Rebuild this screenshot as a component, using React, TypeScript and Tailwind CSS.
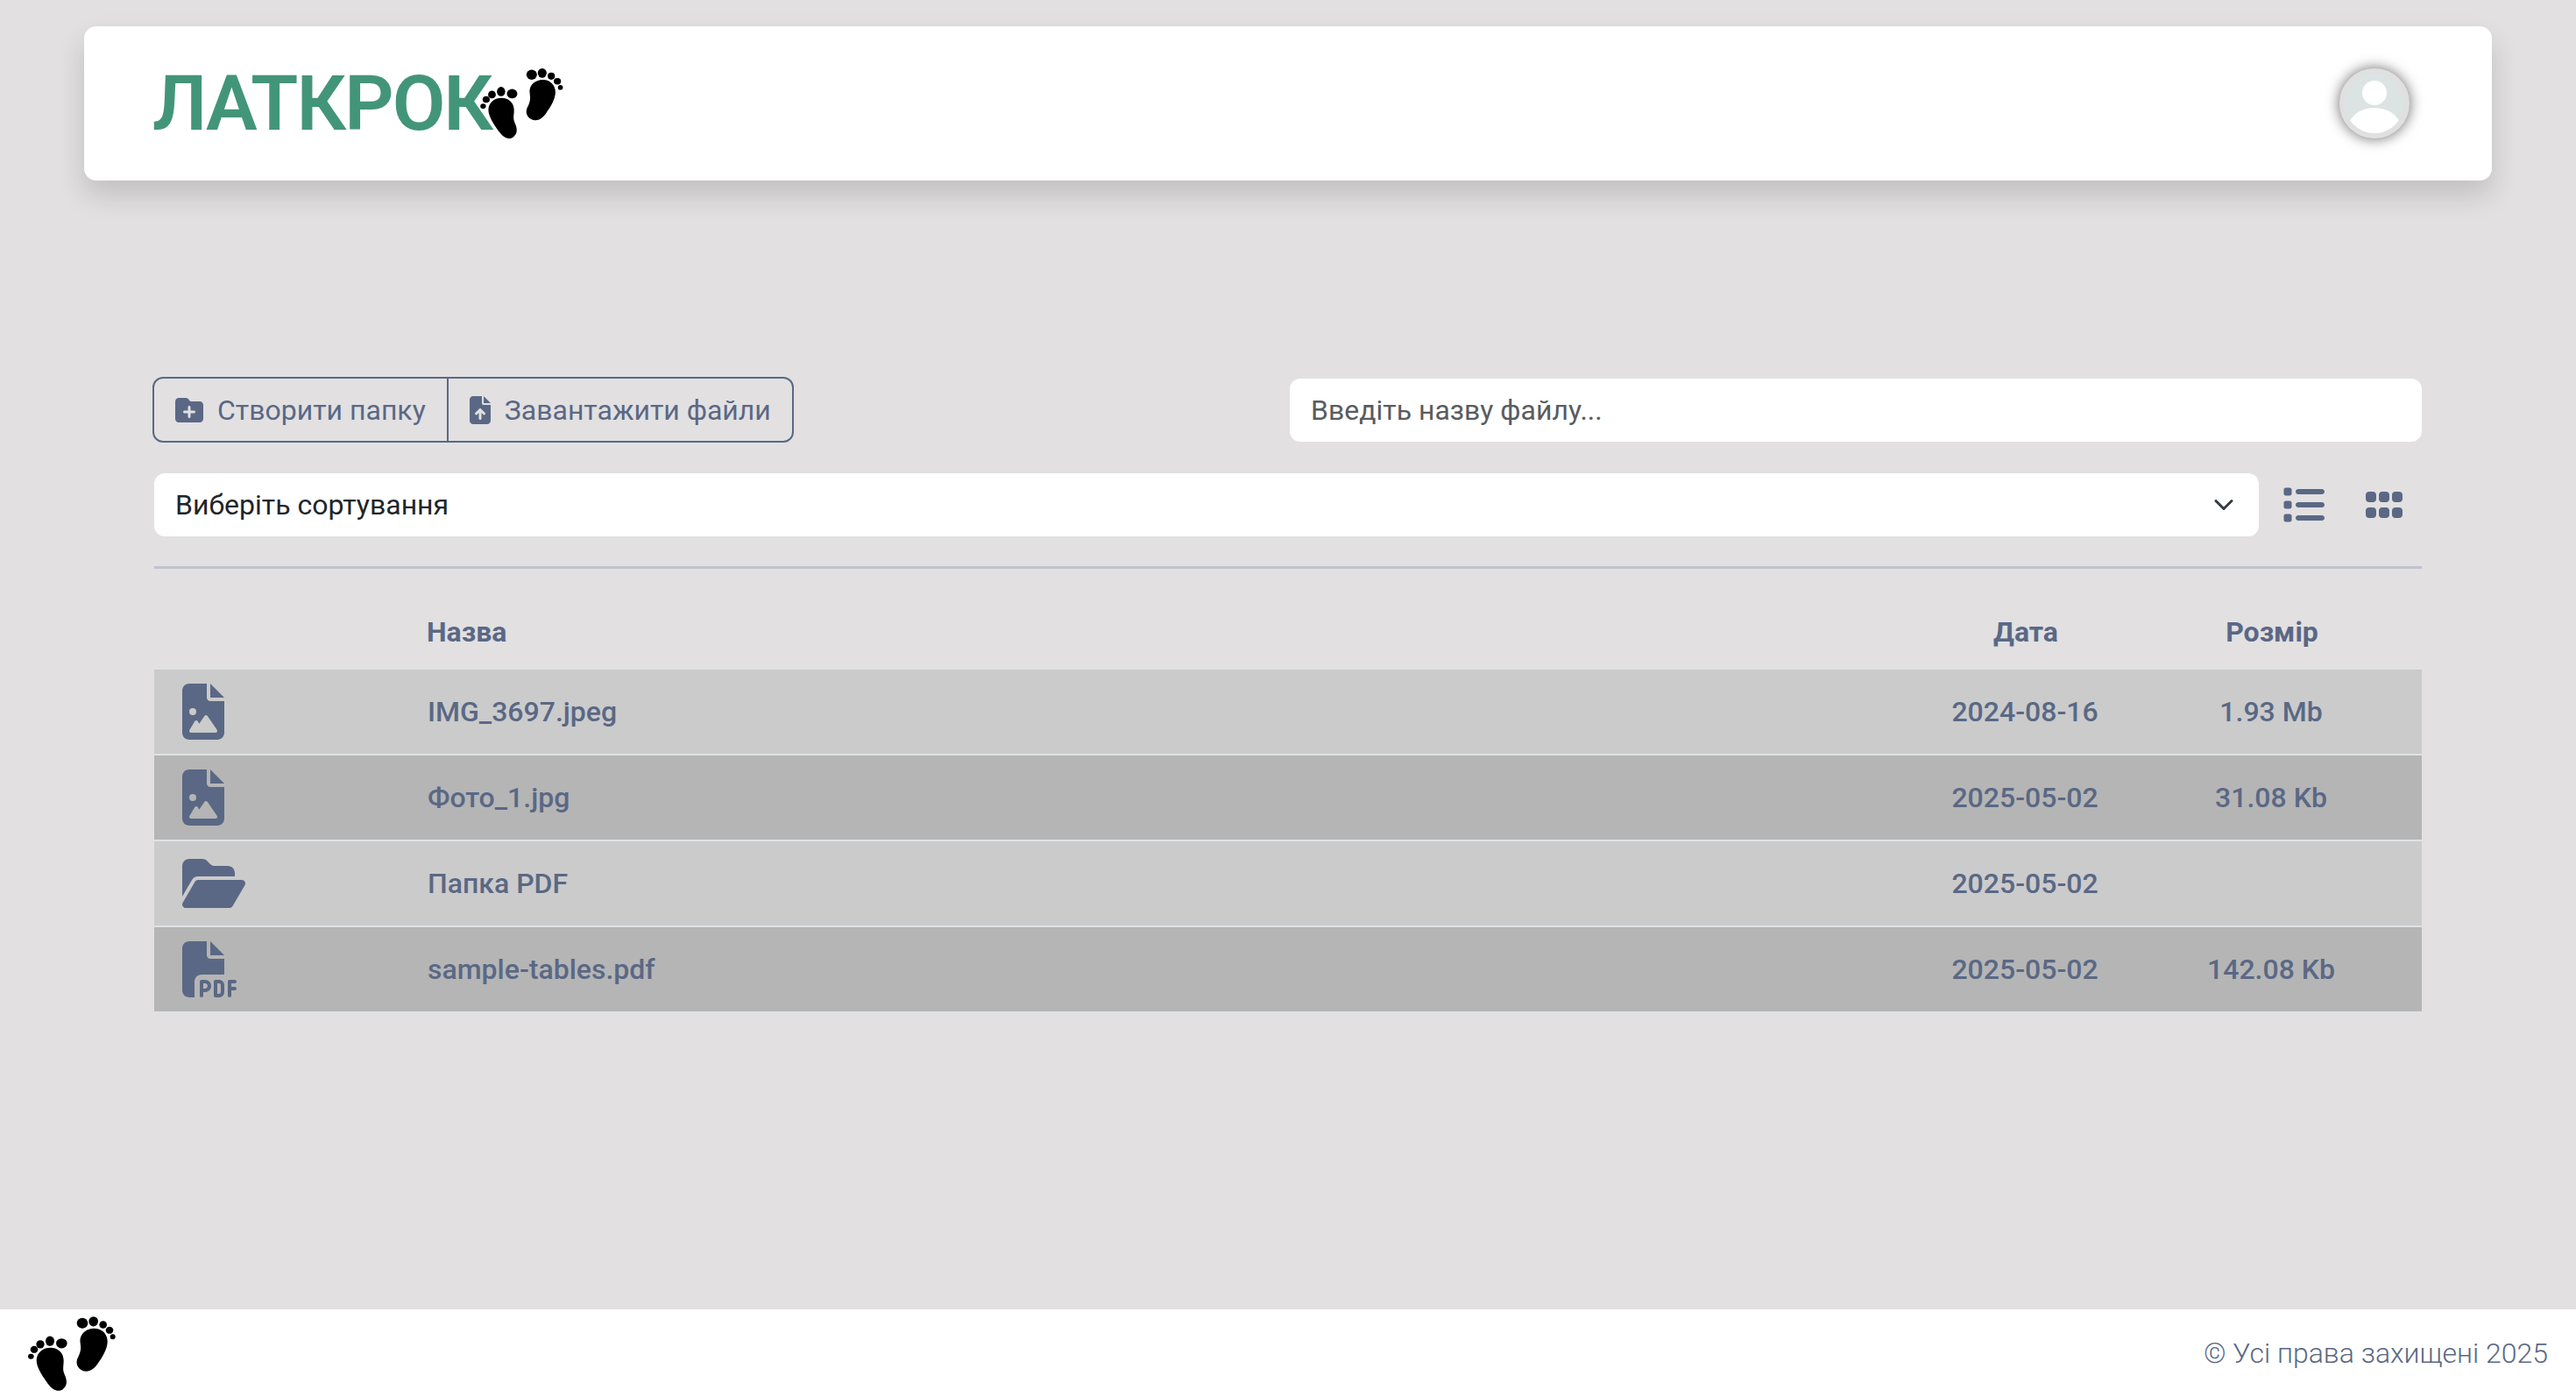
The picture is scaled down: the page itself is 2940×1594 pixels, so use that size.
import React from 'react';
import { FaFileArrowUp, FaFileImage, FaFilePdf, FaFolderOpen, FaFolderPlus, FaGrip, FaList } from 'react-icons/fa6';

const Feet = ({ className }: { className: string }) => (
  <svg viewBox="96 94 300 254" className={className} fill="#000">
    <path d="M172 201C200 201 218 220 218 245C218 265 213 275 221 292C230 312 232 330 215 343C198 354 180 345 165 325C150 305 125 270 125 245C125 220 145 201 172 201Z" />
    <ellipse cx="211" cy="186" rx="19" ry="17" />
    <ellipse cx="171" cy="178" rx="15" ry="17" />
    <ellipse cx="138" cy="189" rx="14" ry="14" />
    <ellipse cx="117" cy="207" rx="13" ry="12" />
    <ellipse cx="106" cy="231" rx="10" ry="9" />
    <path d="M322 135C350 135 368 155 368 180C368 205 350 235 335 255C320 278 300 288 280 278C262 268 258 250 268 232C276 215 278 205 275 185C270 155 295 135 322 135Z" />
    <ellipse cx="282" cy="117" rx="19" ry="18" />
    <ellipse cx="320" cy="111" rx="16" ry="17" />
    <ellipse cx="353" cy="122" rx="13" ry="13" />
    <ellipse cx="375" cy="141" rx="13" ry="12" />
    <ellipse cx="386" cy="163" rx="9" ry="9" />
  </svg>
);

const files = [
  { icon: 'image', name: 'IMG_3697.jpeg', date: '2024-08-16', size: '1.93 Mb' },
  { icon: 'image', name: 'Фото_1.jpg', date: '2025-05-02', size: '31.08 Kb' },
  { icon: 'folder', name: 'Папка PDF', date: '2025-05-02', size: '' },
  { icon: 'pdf', name: 'sample-tables.pdf', date: '2025-05-02', size: '142.08 Kb' },
];

const FileIcon = ({ type }: { type: string }) => {
  if (type === 'folder') return <FaFolderOpen className="h-[64px] w-[72px]" />;
  if (type === 'pdf') return <FaFilePdf className="h-[64px] w-[64px]" />;
  return <FaFileImage className="h-[64px] w-[48px]" />;
};

export default function App() {
  return (
    <div className="min-h-screen flex flex-col bg-[#e2e0e1] text-[#5a6885] font-['Roboto',sans-serif] text-[32px]">
      {/* Header */}
      <header className="ml-[96px] mr-[96px] mt-[30px] h-[176px] bg-white rounded-[14px] shadow-[0_16px_32px_rgba(0,0,0,0.15)] flex items-center justify-between pl-[78px] pr-[94px]">
        <div className="flex items-center">
          <span className="text-[88px] leading-none font-semibold text-[#43957a] tracking-[-2px]">ЛАТКРОК</span>
          <Feet className="w-[95px] h-[80px] -ml-[13px]" />
        </div>
        <div className="w-[80px] h-[80px] rounded-full border-[6px] border-[#e0e0e0] bg-[#dce3e3] shadow-[0_0_16px_rgba(0,0,0,0.6)] overflow-hidden">
          <svg viewBox="0 0 68 68" className="w-full h-full" fill="#fff">
            <circle cx="34" cy="22" r="14" />
            <ellipse cx="34" cy="62" rx="30" ry="23" />
          </svg>
        </div>
      </header>

      {/* Content */}
      <main className="mt-[224px] ml-[174px] mr-[176px]">
        <div className="flex items-center justify-between">
          <div className="flex h-[75px] border-2 border-[#5a6885] rounded-[12px]">
            <button className="flex items-center gap-[16px] pl-[24px] pr-[24px] text-[#5a6885]">
              <FaFolderPlus className="h-[32px] w-[32px]" />
              <span>Створити папку</span>
            </button>
            <button className="flex items-center gap-[16px] pl-[24px] pr-[24px] border-l-2 border-[#5a6885] text-[#5a6885]">
              <FaFileArrowUp className="h-[32px] w-[24px]" />
              <span>Завантажити файли</span>
            </button>
          </div>
          <div className="w-[1292px] h-[72px] bg-white rounded-[12px] flex items-center pl-[24px] text-[#595c5f]">
            Введіть назву файлу...
          </div>
        </div>

        <div className="flex items-center mt-[35px] ml-[2px]">
          <div className="w-[2402px] h-[72px] bg-white rounded-[12px] flex items-center justify-between pl-[24px] pr-[28px] text-[#212529]">
            <span>Виберіть сортування</span>
            <svg viewBox="0 0 16 16" className="w-[24px] h-[24px]" fill="none" stroke="#343a40" strokeWidth="2" strokeLinecap="round" strokeLinejoin="round">
              <path d="m2 5 6 6 6-6" />
            </svg>
          </div>
          <FaList className="h-[48px] w-[48px] ml-[27px]" />
          <FaGrip className="h-[48px] w-[42px] ml-[47px]" />
        </div>

        <div className="mt-[34px] ml-[2px] h-[3px] bg-[#c0c2cb]" />

        {/* File table */}
        <div className="ml-[2px]">
          <div className="grid grid-cols-[311px_1fr_220px_342px] items-center h-[115px] pt-[30px] font-bold border-b-2 border-[#dee2e6]">
            <div />
            <div>Назва</div>
            <div className="text-center">Дата</div>
            <div className="text-center">Розмір</div>
          </div>
          {files.map((file, i) => (
            <div
              key={file.name}
              className={`grid grid-cols-[312px_1fr_218px_344px] items-center h-[98px] font-medium border-b-2 border-[#dee2e6] ${i % 2 === 0 ? 'bg-[#cbcbcb]' : 'bg-[#b5b5b5]'}`}
            >
              <div className="pl-[32px]">
                <FileIcon type={file.icon} />
              </div>
              <div>{file.name}</div>
              <div className="text-center">{file.date}</div>
              <div className="text-center">{file.size}</div>
            </div>
          ))}
        </div>
      </main>

      {/* Footer */}
      <footer className="mt-auto h-[100px] bg-white flex items-center justify-between pl-[32px] pr-[32px]">
        <Feet className="w-[100px] h-[85px]" />
        <span className="font-light">© Усі права захищені 2025</span>
      </footer>
    </div>
  );
}
